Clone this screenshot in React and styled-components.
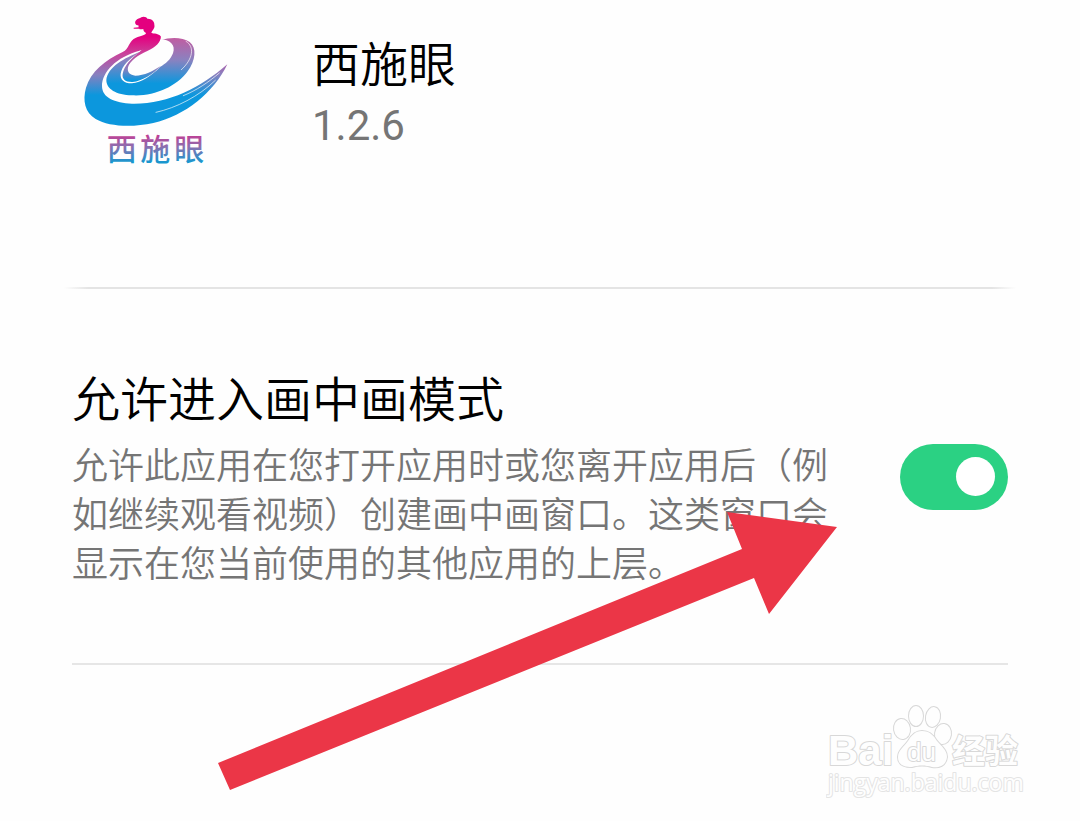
import React, { useState } from 'react';
import styled, { createGlobalStyle } from 'styled-components';

const App = () => {
    const [allowed, setAllowed] = useState(true)

    return (
        <>
            <GlobalStyle />
            <Page>
                <Header>
                    <AppLogo />
                    <AppInfo>
                        <AppName>西施眼</AppName>
                        <Version>1.2.6</Version>
                    </AppInfo>
                </Header>
                <Divider />
                <Setting>
                    <SettingText>
                        <SettingTitle htmlFor="pip">允许进入画中画模式</SettingTitle>
                        <Description id="pip-info">
                            允许此应用在您打开应用时或您离开应用后（例如继续观看视频）创建画中画窗口。这类窗口会显示在您当前使用的其他应用的上层。
                        </Description>
                    </SettingText>
                    <Switch
                        id="pip"
                        type="checkbox"
                        role="switch"
                        aria-describedby="pip-info"
                        checked={allowed}
                        onChange={(e) => setAllowed(e.target.checked)}
                    />
                </Setting>
                <Pointer />
                <Watermark />
            </Page>
        </>
    )
};
export default App;

const AppLogo = () => (
    <LogoSvg viewBox="6 9 480 480" aria-label="西施眼">
        <defs>
            <linearGradient id="dress" gradientUnits="userSpaceOnUse" x1="0" y1="95" x2="0" y2="270">
                <stop offset="0" stopColor="#e4007f" />
                <stop offset="0.3" stopColor="#c9449b" />
                <stop offset="0.65" stopColor="#8880bf" />
                <stop offset="1" stopColor="#0c97dd" />
            </linearGradient>
            <linearGradient id="ribbon" gradientUnits="userSpaceOnUse" x1="0" y1="95" x2="0" y2="235">
                <stop offset="0" stopColor="#c45a9f" />
                <stop offset="0.5" stopColor="#8a82c0" />
                <stop offset="1" stopColor="#0c97dd" />
            </linearGradient>
            <linearGradient id="fold" gradientUnits="userSpaceOnUse" x1="0" y1="95" x2="0" y2="225">
                <stop offset="0" stopColor="#e4007f" />
                <stop offset="0.4" stopColor="#c9449b" />
                <stop offset="0.75" stopColor="#8880bf" />
                <stop offset="1" stopColor="#0c97dd" />
            </linearGradient>
            <linearGradient id="word" gradientUnits="userSpaceOnUse" x1="0" y1="380" x2="0" y2="472">
                <stop offset="0" stopColor="#cf2f8c" />
                <stop offset="0.5" stopColor="#8a70b0" />
                <stop offset="1" stopColor="#1797cf" />
            </linearGradient>
        </defs>
        {/* right ribbon with its opening */}
        <path
            fill="url(#ribbon)"
            d="M210 140 C165 158 112 186 109 225 C109 252 138 270 186 271 C251 275 319 246 353 199
               C377 166 381 128 359 111 C338 96 298 96 274 106 Z"
        />
        <path
            fill="#fefefe"
            d="M270 103 C300 103 318 120 309 145 C301 165 287 176 270 186 C246 212 212 233 186 235
               C160 235 150 222 152 206 C155 184 178 160 207 144 Z"
        />
        {/* inner fold, left of the opening */}
        <path
            fill="url(#fold)"
            d="M272 94 C274 112 256 127 232 138 C206 150 180 166 174 187 C171 202 180 211 196 212
               C222 212 250 198 272 183 C246 210 216 228 188 231 C165 232 156 221 158 207
               C162 183 183 160 209 141 L238 110 Z"
        />
        {/* figure and the long tail */}
        <path
            fill="url(#dress)"
            d="M228 84 C221 80 220 76 220 72 C213 74 208 73 208 71 L191 71 L191 68 L206 67 L205 61
               C197 60 193 54 197 47 C202 40 210 41 214 37 C221 33 231 37 232 41 C244 40 254 49 253 59
               C256 70 246 76 244 83 C252 87 266 84 272 94 C272 114 240 130 208 137
               C140 156 96 200 96 243 C96 278 134 294 186 296 C294 298 390 250 472 178
               C432 262 345 333 250 354 C186 368 116 365 77 342 C45 322 37 287 48 248
               C62 201 105 165 158 141 C178 132 176 106 198 98 C212 92 226 92 228 84 Z"
        />
        <g fill="none" stroke="#fefefe" strokeWidth="2" strokeLinecap="round">
            <path d="M258 322 C320 308 385 275 436 226" />
            <path d="M340 272 C380 256 415 232 448 204" />
            <path d="M348 109 C376 125 368 164 334 194" />
        </g>
        <text
            x="110 211 313"
            y="464"
            fill="url(#word)"
            fontFamily='"Noto Sans CJK SC", sans-serif'
            fontSize="90"
            fontWeight="500"
        >
            西施眼
        </text>
    </LogoSvg>
);

const Pointer = () => (
    <PointerSvg viewBox="0 0 620 280" aria-hidden="true">
        <path fill="#eb3647" d="M0 251 L524 37 L509 0 L619 15 L551 102 L536 66 L12 278 Z" />
    </PointerSvg>
);

const Watermark = () => (
    <WatermarkSvg viewBox="0 0 200 100" aria-label="Baidu 经验">
        <g fill="#fefefe" stroke="#d8d8d8" strokeWidth="2" paintOrder="stroke" strokeLinejoin="round">
            <text x="2" y="65" fontFamily='"Liberation Sans", sans-serif' fontSize="42" fontWeight="700">Bai</text>
            <ellipse cx="76" cy="29" rx="8" ry="10" transform="rotate(-8 76 29)" />
            <ellipse cx="90" cy="16" rx="7" ry="10" />
            <ellipse cx="107" cy="17" rx="7" ry="10" transform="rotate(10 107 17)" />
            <ellipse cx="117" cy="34" rx="8" ry="10" transform="rotate(8 117 34)" />
            <path d="M96 31 C104 31 108 36 111 41 C116 47 121 50 121 57 C120 66 113 68 106 67 C99 65 93 65 86 67 C78 67 72 65 72 57 C72 50 78 47 82 41 C85 36 89 31 96 31 Z" />
            <text x="81" y="61" fontFamily='"Liberation Sans", sans-serif' fontSize="26">du</text>
            <text x="126" y="63" fontFamily='"Noto Sans CJK SC", sans-serif' fontSize="33" fontWeight="700">经验</text>
            <text x="2" y="91" stroke="#e4e4e4" fontFamily='"Open Sans", sans-serif' fontSize="23">jingyan.baidu.com</text>
        </g>
    </WatermarkSvg>
);

const GlobalStyle = createGlobalStyle`
    body {
        margin: 0;
        background: #fefefe;
        font-family: Roboto, "Noto Sans CJK SC", sans-serif;
    }
`

const Page = styled.main`
    position: relative;
    box-sizing: border-box;
    min-height: 100vh;
    padding: 8px 72px 0;
    overflow: hidden;
`

const Header = styled.header`
    display: flex;
    align-items: flex-start;
    gap: 80px;
    padding-bottom: 119px;
`

const LogoSvg = styled.svg`
    flex: none;
    width: 160px;
    height: 160px;
`

const AppInfo = styled.div`
    display: flex;
    flex-direction: column;
    gap: 4px;
    padding-top: 26px;
`

const AppName = styled.h1`
    margin: 0;
    font-size: 48px;
    font-weight: 350;
    line-height: 64px;
    color: #000;
`

const Version = styled.span`
    font-size: 42px;
    line-height: 48px;
    color: #757575;
`

const Divider = styled.hr`
    height: 2px;
    margin: 0 -8px;
    border: 0;
    background: linear-gradient(to right, transparent, #e4e4e4 24px, #e4e4e4 calc(100% - 24px), transparent);
`

const Setting = styled.section`
    display: flex;
    align-items: center;
    justify-content: space-between;
    gap: 68px;
    padding: 74px 0 73px;
    border-bottom: 2px solid #e6e6e6;
`

const SettingText = styled.div`
    flex: 1;
`

const SettingTitle = styled.label`
    display: block;
    margin-bottom: 4px;
    font-size: 48px;
    font-weight: 350;
    line-height: 76px;
    color: #000;
`

const Description = styled.p`
    margin: 0;
    font-size: 36px;
    font-weight: 350;
    line-height: 49px;
    color: #757575;
`

const Switch = styled.input`
    appearance: none;
    display: flex;
    align-items: center;
    justify-content: ${(props) => (props.checked ? 'flex-end' : 'flex-start')};
    flex: none;
    box-sizing: border-box;
    width: 108px;
    height: 66px;
    margin: 0;
    padding: 0 13px;
    border-radius: 33px;
    background: ${(props) => (props.checked ? '#2bd183' : '#d8d8d8')};
    cursor: pointer;

    &::before {
        content: '';
        width: 39px;
        height: 39px;
        border-radius: 50%;
        background: #fff;
    }
`

const PointerSvg = styled.svg`
    position: absolute;
    top: 512px;
    left: 218px;
    width: 620px;
    height: 280px;
    pointer-events: none;
`

const WatermarkSvg = styled.svg`
    position: absolute;
    right: 54px;
    bottom: 21px;
    width: 200px;
    height: 100px;
`
